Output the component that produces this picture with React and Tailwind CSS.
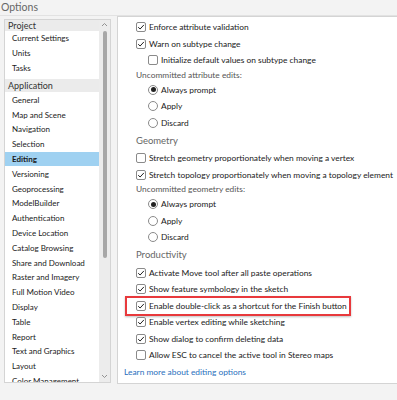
import { Fragment } from 'react'

const projectItems = ['Current Settings', 'Units', 'Tasks']
const appItems = [
  'General', 'Map and Scene', 'Navigation', 'Selection', 'Editing', 'Versioning',
  'Geoprocessing', 'ModelBuilder', 'Authentication', 'Device Location', 'Catalog Browsing',
  'Share and Download', 'Raster and Imagery', 'Full Motion Video', 'Display', 'Table',
  'Report', 'Text and Graphics', 'Layout', 'Color Management',
]

function Checkbox({ checked }) {
  return (
    <span className="w-[10px] h-[10px] shrink-0 rounded-[2px] border border-[#8a8a8a] bg-white flex items-center justify-center">
      {checked && (
        <svg width="8" height="8" viewBox="0 0 8 8">
          <path d="M1.2 4.2 L3.1 6 L6.9 1.9" fill="none" stroke="#222" strokeWidth="1" />
        </svg>
      )}
    </span>
  )
}

function Radio({ checked }) {
  return (
    <span className="w-[10px] h-[10px] shrink-0 rounded-full border border-[#8a8a8a] bg-white flex items-center justify-center">
      {checked && <span className="w-[5px] h-[5px] rounded-full bg-[#222]" />}
    </span>
  )
}

function CheckRow({ label, checked, indent, boxed }) {
  return (
    <div className={`h-[16.5px] flex items-center ${indent ? 'pl-[12px]' : ''}`}>
      <div className="relative flex items-center gap-[3px]">
        {boxed && (
          <span className="absolute -left-[11px] -right-[4px] -top-[5px] -bottom-[5px] border-2 border-[#e8393c] shadow-[0_1px_2px_rgba(0,0,0,0.25)]" />
        )}
        <Checkbox checked={checked} />
        <span className="text-[#1a1a1a] whitespace-nowrap">{label}</span>
      </div>
    </div>
  )
}

function RadioRow({ label, checked }) {
  return (
    <div className="h-[16.5px] flex items-center gap-[3px] pl-[12px]">
      <Radio checked={checked} />
      <span className="text-[#1a1a1a]">{label}</span>
    </div>
  )
}

function Label({ children }) {
  return <div className="h-[13px] flex items-center text-[#555]">{children}</div>
}

function Heading({ children }) {
  return <div className="h-[19px] flex items-center text-[9.5px] text-[#666]">{children}</div>
}

function RadioGroup() {
  return (
    <>
      <RadioRow label="Always prompt" checked />
      <RadioRow label="Apply" />
      <RadioRow label="Discard" />
    </>
  )
}

export default function App() {
  return (
    <div className="w-[397px] h-[400px] overflow-hidden bg-[#f3f3f3] text-[8px] leading-none" style={{ fontFamily: 'Lato, "Noto Sans", sans-serif' }}>
      <div className="h-[16px] pl-[1px] pt-[2px] text-[10.5px] text-[#666] leading-[11px] border-b border-[#e2e2e2]">Options</div>
      <div className="flex items-start">
        {/* category list */}
        <div className="ml-[4px] mt-[3px] w-[107px] h-[364px] shrink-0 border border-[#d4d4d4] bg-white flex overflow-hidden">
          <div className="flex-1 min-w-0">
            <div className="h-[11px] bg-[#ebebeb] pl-[3px] flex items-center text-[9px] text-[#333]">Project</div>
            {projectItems.map(t => (
              <div key={t} className="h-[14.8px] flex items-center pl-[7px] text-[#1a1a1a] whitespace-nowrap">{t}</div>
            ))}
            <div className="mt-[4px] h-[13px] bg-[#ebebeb] pl-[3px] flex items-center text-[9px] text-[#333]">Application</div>
            {appItems.map(t => (
              <div
                key={t}
                className={`h-[14.8px] flex items-center pl-[7px] text-[#1a1a1a] whitespace-nowrap ${t === 'Editing' ? 'bg-[#9fd1f1] font-bold' : ''}`}
              >
                {t}
              </div>
            ))}
          </div>
          <div className="w-[11px] shrink-0 bg-[#ececec] flex flex-col items-center">
            <svg width="7" height="8" viewBox="0 0 7 8" className="mt-[1px]">
              <path d="M1 5 L3.5 2.5 L6 5" fill="none" stroke="#888" strokeWidth="0.9" />
            </svg>
            <div className="w-[4px] h-[227px] mt-[2px] rounded-full bg-[#a7a7a7]" />
            <div className="flex-1" />
            <svg width="7" height="8" viewBox="0 0 7 8" className="mb-[2px]">
              <path d="M1 3 L3.5 5.5 L6 3" fill="none" stroke="#888" strokeWidth="0.9" />
            </svg>
          </div>
        </div>

        {/* editing settings */}
        <div className="ml-[6px] w-[300px] h-[368px] border border-[#d4d4d4] bg-white pl-[18px] pt-[2px] shrink-0 text-[8.4px]">
          <CheckRow label="Enforce attribute validation" checked />
          <CheckRow label="Warn on subtype change" checked />
          <CheckRow label="Initialize default values on subtype change" indent />
          <Label>Uncommitted attribute edits:</Label>
          <RadioGroup />
          <Heading>Geometry</Heading>
          <CheckRow label="Stretch geometry proportionately when moving a vertex" />
          <CheckRow label="Stretch topology proportionately when moving a topology element" checked />
          <Label>Uncommitted geometry edits:</Label>
          <RadioGroup />
          <Heading>Productivity</Heading>
          {[
            ['Activate Move tool after all paste operations', true],
            ['Show feature symbology in the sketch', true],
            ['Enable double-click as a shortcut for the Finish button', true, true],
            ['Enable vertex editing while sketching', true],
            ['Show dialog to confirm deleting data', true],
            ['Allow ESC to cancel the active tool in Stereo maps', false],
          ].map(([label, checked, boxed]) => (
            <Fragment key={label}>
              <CheckRow label={label} checked={checked} boxed={boxed} />
            </Fragment>
          ))}
          <div className="h-[17px] -ml-[12px] flex items-center text-[#2a6fbd]">Learn more about editing options</div>
        </div>
      </div>
    </div>
  )
}
